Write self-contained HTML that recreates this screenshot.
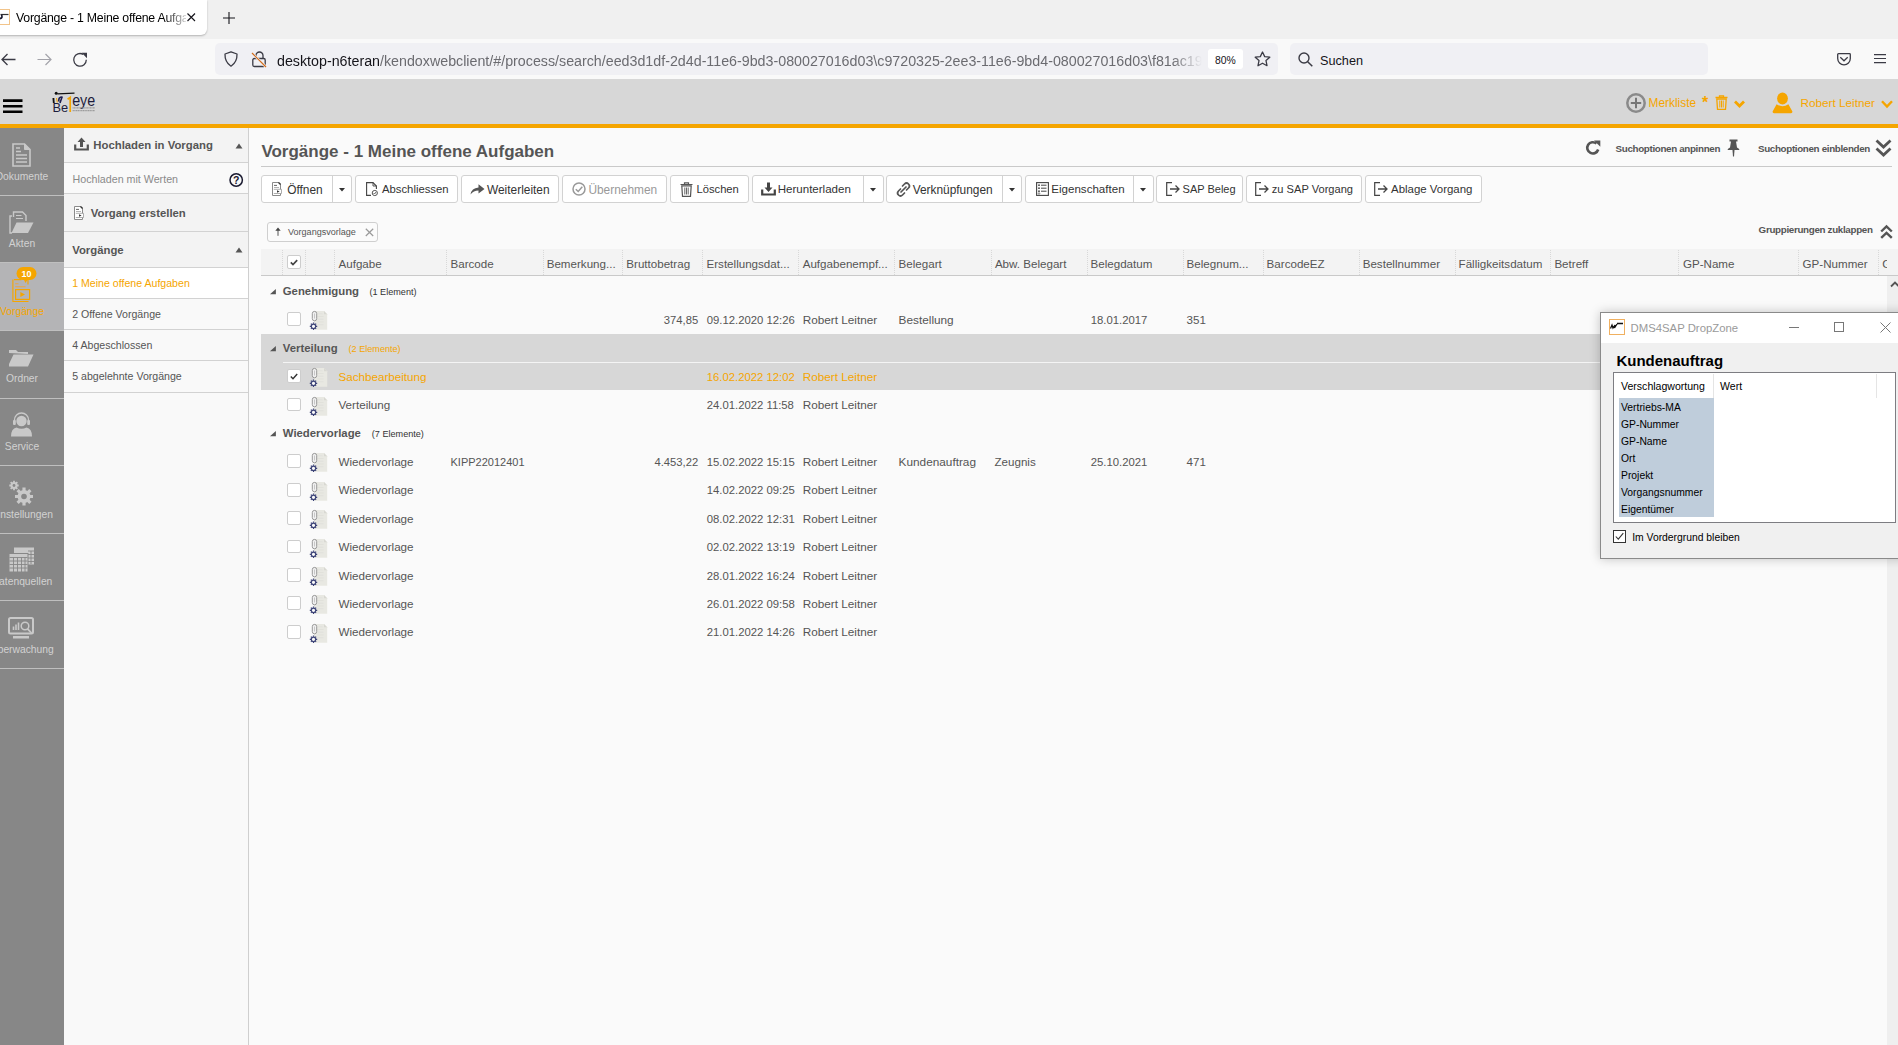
<!DOCTYPE html>
<html><head><meta charset="utf-8">
<style>
*{margin:0;padding:0;box-sizing:border-box}
html,body{width:1898px;height:1045px;overflow:hidden;background:#fafafa;font-family:"Liberation Sans",sans-serif;color:#555}
.a{position:absolute;white-space:nowrap}
svg{position:absolute;overflow:visible}
/* browser chrome */
#tabbar{position:absolute;left:0;top:0;width:1898px;height:39px;background:#f0f0f0}
#tab{position:absolute;left:-8px;top:0;width:215px;height:35px;background:#fff;border-radius:0 0 6px 6px;box-shadow:0 1px 2px rgba(0,0,0,.25)}
#nav{position:absolute;left:0;top:39px;width:1898px;height:40px;background:#f9f9f9}
#url{position:absolute;left:215px;top:43px;width:1063px;height:32px;background:#f0f0f4;border-radius:5px}
#srch{position:absolute;left:1290px;top:43px;width:418px;height:32px;background:#f0f0f4;border-radius:5px}
/* app header */
#hdr{position:absolute;left:0;top:79px;width:1898px;height:45px;background:#d7d7d7}
#orange{position:absolute;left:0;top:124px;width:1898px;height:4px;background:#f5a500}
#side{position:absolute;left:0;top:128px;width:64px;height:917px;background:#878787}
#side2{position:absolute;left:64px;top:128px;width:185px;height:917px;background:#f9f9f9;border-right:1px solid #cfcfcf}
.st{position:absolute;left:-22px;width:88px;text-align:center;font-size:10.3px;color:#d2d2d2;white-space:nowrap}
.sb{position:absolute;white-space:nowrap;font-size:11.35px;font-weight:bold;color:#555}
.si{position:absolute;left:72.2px;white-space:nowrap;font-size:10.6px;color:#555}
.btn{position:absolute;top:175.4px;height:27.2px;background:#fff;border:1px solid #d2d2d2;border-radius:3px}
.spl{position:absolute;top:0;width:1px;height:100%;background:#d2d2d2}
.bt{position:absolute;top:182.7px;white-space:nowrap;color:#333}
.cb{position:absolute;width:13.4px;height:13.8px;background:#fff;border:1px solid #cdcdcd;border-radius:2px}
.dz{position:absolute;white-space:nowrap;font-size:10.35px;color:#000}
</style></head>
<body>
<div id="tabbar"></div>
<div id="tab"></div>
<div id="nav"></div>
<div id="url"></div>
<div id="srch"></div>
<div id="hdr"></div>
<div id="orange"></div>
<div id="side"></div>
<div id="side2"></div>

<!-- tab contents -->
<div class="a" style="left:-6px;top:9px;width:16px;height:16px;border:1px solid #f2c48a;background:#fff"></div>
<svg style="left:0px;top:12px" width="10" height="9" viewBox="0 0 10 9"><path d="M0.5 2.5 H8.5" stroke="#333" stroke-width="1.2"/><path d="M1.6 2.8 Q2.2 4.8 1.8 5.5 Q1.2 6.5 -1 6.8" stroke="#1a1a30" stroke-width="1.7" fill="none"/></svg>
<div class="a" style="left:16px;top:10.5px;font-size:12.3px;letter-spacing:-0.23px;color:#000;width:170px;overflow:hidden;-webkit-mask-image:linear-gradient(90deg,#000 148px,rgba(0,0,0,.25) 168px,transparent 174px)">Vorgänge - 1 Meine offene Aufgaben</div>
<svg style="left:187px;top:13px" width="9" height="9" viewBox="0 0 9 9"><path d="M0.5 0.5 L8 8 M8 0.5 L0.5 8" stroke="#15141a" stroke-width="1.15"/></svg>
<svg style="left:222.5px;top:12px" width="12" height="12" viewBox="0 0 12 12"><path d="M6 0 V12 M0 6 H12" stroke="#15141a" stroke-width="1.1"/></svg>
<!-- nav -->
<svg style="left:1px;top:53px" width="15" height="13" viewBox="0 0 15 13"><path d="M14.5 6.5 H1.5 M6.5 1 L1 6.5 L6.5 12" stroke="#3b3b45" stroke-width="1.3" fill="none"/></svg>
<svg style="left:37px;top:53px" width="15" height="13" viewBox="0 0 15 13"><path d="M0.5 6.5 H13.5 M8.5 1 L14 6.5 L8.5 12" stroke="#a3a3aa" stroke-width="1.2" fill="none"/></svg>
<svg style="left:72px;top:52px" width="16" height="16" viewBox="0 0 16 16"><path d="M14.3 7.8 A6.3 6.3 0 1 1 11.2 2.4" stroke="#3b3b45" stroke-width="1.3" fill="none"/><path d="M9.6 0.8 H15 V6.2 Z" fill="#3b3b45"/></svg>
<svg style="left:224px;top:51px" width="14" height="16" viewBox="0 0 14 16"><path d="M7 0.8 L13 3 Q13.3 11 7 15.2 Q0.7 11 1 3 Z" stroke="#3b3b45" stroke-width="1.3" fill="none" stroke-linejoin="round"/></svg>
<svg style="left:252px;top:51px" width="15" height="16" viewBox="0 0 15 16"><path d="M4 7.5 V4.5 A3.5 3.5 0 0 1 11 4.5 V7.5" stroke="#3b3b45" stroke-width="1.3" fill="none"/><rect x="0.8" y="7.5" width="12.4" height="8" rx="1.5" stroke="#3b3b45" stroke-width="1.3" fill="none"/><path d="M0 2 L14 16" stroke="#f0f0f4" stroke-width="2.5"/><path d="M0 2 L14 16" stroke="#d36c1a" stroke-width="1.2"/></svg>
<div class="a" style="left:277px;top:52.5px;font-size:14.25px;color:#15141a;width:930px;overflow:hidden;-webkit-mask-image:linear-gradient(90deg,#000 895px,transparent 925px)">desktop-n6teran<span style="color:#6b6b70">/kendoxwebclient/#/process/search/eed3d1df-2d4d-11e6-9bd3-080027016d03\c9720325-2ee3-11e6-9bd4-080027016d03\f81ac19f-2ee3</span></div>
<div class="a" style="left:1208px;top:49px;width:35px;height:20px;background:#fff;border-radius:3px"></div>
<div class="a" style="left:1215px;top:55px;font-size:10.4px;color:#15141a">80%</div>
<svg style="left:1254px;top:51px" width="17" height="16" viewBox="0 0 17 16"><path d="M8.5 1 L10.7 5.6 L15.8 6.2 L12 9.6 L13 14.7 L8.5 12.2 L4 14.7 L5 9.6 L1.2 6.2 L6.3 5.6 Z" stroke="#3b3b45" stroke-width="1.3" fill="none" stroke-linejoin="round"/></svg>
<svg style="left:1298px;top:52px" width="15" height="15" viewBox="0 0 15 15"><circle cx="6" cy="6" r="5" stroke="#3b3b45" stroke-width="1.4" fill="none"/><path d="M9.7 9.7 L14.3 14.3" stroke="#3b3b45" stroke-width="1.5"/></svg>
<div class="a" style="left:1320px;top:54px;font-size:12.7px;color:#15141a">Suchen</div>
<svg style="left:1837px;top:53px" width="14" height="13" viewBox="0 0 14 13"><path d="M1.5 0.7 H12.5 Q13.3 0.7 13.3 1.5 V5.5 A6.3 6.3 0 0 1 0.7 5.5 V1.5 Q0.7 0.7 1.5 0.7 Z" stroke="#3b3b45" stroke-width="1.3" fill="none"/><path d="M3.3 4.2 L7 7.8 L10.7 4.2" stroke="#3b3b45" stroke-width="1.2" fill="none"/></svg>
<svg style="left:1874px;top:53px" width="12" height="11" viewBox="0 0 12 11"><path d="M0 1.6 H12 M0 5.5 H12 M0 9.6 H12" stroke="#3b3b45" stroke-width="1.1"/></svg>

<!-- sidebar icons -->
<div class="a" style="left:0;top:262px;width:64px;height:68px;background:#b4b4b6"></div>
<div class="a" style="left:0;top:195px;width:64px;height:1px;background:#bfbfbf"></div>
<div class="a" style="left:0;top:262px;width:64px;height:1px;background:#bfbfbf"></div>
<div class="a" style="left:0;top:330px;width:64px;height:1px;background:#bfbfbf"></div>
<div class="a" style="left:0;top:398px;width:64px;height:1px;background:#bfbfbf"></div>
<div class="a" style="left:0;top:465px;width:64px;height:1px;background:#bfbfbf"></div>
<div class="a" style="left:0;top:533px;width:64px;height:1px;background:#bfbfbf"></div>
<div class="a" style="left:0;top:600px;width:64px;height:1px;background:#bfbfbf"></div>
<div class="a" style="left:0;top:668px;width:64px;height:1px;background:#bfbfbf"></div>
<div class="st" style="top:171px">Dokumente</div>
<div class="st" style="top:237.6px">Akten</div>
<div class="st" style="top:306px;color:#f5a500">Vorgänge</div>
<div class="st" style="top:373px">Ordner</div>
<div class="st" style="top:440.8px">Service</div>
<div class="st" style="top:508.5px">Einstellungen</div>
<div class="st" style="top:575.8px">Datenquellen</div>
<div class="st" style="top:643.5px">Überwachung</div>
<!-- Dokumente icon -->
<svg style="left:12px;top:143px" width="19" height="24" viewBox="0 0 19 24"><path d="M1 1 H12.5 L18 6.5 V23 H1 Z" stroke="#c9c9c9" stroke-width="1.6" fill="none"/><path d="M12.5 1 V6.5 H18" fill="#c9c9c9" stroke="#c9c9c9" stroke-width="1"/><path d="M4 5 H8 M4 8.5 H9 M4 12 H15 M4 15.5 H15 M4 19 H15" stroke="#c9c9c9" stroke-width="1.5"/></svg>
<!-- Akten icon -->
<svg style="left:9px;top:211px" width="25" height="23" viewBox="0 0 25 23"><path d="M4.5 6 V1 H13.5 L17 4.5 V10" stroke="#c9c9c9" stroke-width="1.4" fill="none"/><path d="M7 4.5 H12.5 M7 7.5 H14" stroke="#c9c9c9" stroke-width="1.2"/><path d="M3 5 H1 V22 H3" stroke="#c9c9c9" stroke-width="1.4" fill="none"/><path d="M2.5 22 L7.5 11.5 H24.5 L19 22 Z" fill="#c9c9c9"/></svg>
<!-- Vorgaenge icon -->
<svg style="left:12px;top:266px" width="26" height="37" viewBox="0 0 26 37"><path d="M2 13.6 H9.5 M14.5 13.6 H16 V18.5 M16.5 35.5 H0.9 V13.6" stroke="#f5a500" stroke-width="1.1" fill="none"/><path d="M3.2 17.8 H6.5 M3.2 20.8 H13.5" stroke="#e8a545" stroke-width="1.1"/><rect x="3.6" y="23.6" width="14" height="9.8" stroke="#f5a500" stroke-width="1.2" fill="none"/><path d="M8.3 26 L13 28.5 L8.3 31 Z" fill="#f5a500"/><rect x="4.5" y="1" width="20" height="13" rx="6.5" fill="#f5a500"/><path d="M11.5 13 L13.5 17 L16 13 Z" fill="#f5a500"/><text x="14.6" y="11" font-family="Liberation Sans" font-weight="bold" font-size="9" fill="#fff" text-anchor="middle">10</text></svg>
<!-- Ordner icon -->
<svg style="left:8px;top:349px" width="26" height="18" viewBox="0 0 26 18"><path d="M1 4 V1 H8 L10 3 H20 V5" fill="#c9c9c9"/><path d="M1 3 V17.5 H20 L25.5 5.5 H5.5 L1 15" fill="#c9c9c9"/></svg>
<!-- Service icon -->
<svg style="left:10px;top:412px" width="23" height="25" viewBox="0 0 23 25"><circle cx="11.5" cy="9" r="5.2" fill="#c9c9c9"/><path d="M4.5 10 V8 A7 7 0 0 1 18.5 8 V10" stroke="#c9c9c9" stroke-width="1.3" fill="none"/><rect x="3" y="8" width="2.8" height="5" rx="1" fill="#c9c9c9"/><rect x="17.2" y="8" width="2.8" height="5" rx="1" fill="#c9c9c9"/><path d="M1 24.5 Q1 16.5 6.5 15.5 Q11.5 18 16.5 15.5 Q22 16.5 22 24.5 Z" fill="#c9c9c9"/></svg>
<!-- Einstellungen icon -->
<svg style="left:8px;top:480px" width="26" height="26" viewBox="0 0 26 26"><g fill="#c9c9c9"><circle cx="16" cy="16.5" r="6.5"/><circle cx="6" cy="5.5" r="3.5"/></g><g stroke="#c9c9c9" stroke-width="3.2"><path d="M16 7.5 V25.5 M7 16.5 H25 M9.6 10.1 L22.4 22.9 M22.4 10.1 L9.6 22.9"/></g><g stroke="#c9c9c9" stroke-width="1.8"><path d="M6 0.8 V10.2 M1.3 5.5 H10.7 M2.7 2.2 L9.3 8.8 M9.3 2.2 L2.7 8.8"/></g><circle cx="16" cy="16.5" r="2.8" fill="#878787"/><circle cx="6" cy="5.5" r="1.4" fill="#878787"/></svg>
<!-- Datenquellen icon -->
<svg style="left:8px;top:547px" width="27" height="26" viewBox="0 0 27 26"><rect x="6" y="0.5" width="20" height="17" fill="#c9c9c9"/><rect x="1" y="6.5" width="19" height="18.5" fill="#c9c9c9" stroke="#878787" stroke-width="1"/><g stroke="#878787" stroke-width="0.9"><path d="M1.5 10.5 H19.5 M1.5 14 H19.5 M1.5 17.5 H19.5 M1.5 21 H19.5 M5.5 10.5 V25 M9.5 10.5 V25 M13.5 10.5 V25 M17 10.5 V25"/><path d="M20 4 H26 M20 7.5 H26 M20 11 H26 M20 14.5 H26 M23 4 V17"/></g></svg>
<!-- Ueberwachung icon -->
<svg style="left:8px;top:617px" width="27" height="22" viewBox="0 0 27 22"><rect x="1" y="1" width="24" height="15.5" rx="1.5" stroke="#c9c9c9" stroke-width="2" fill="none"/><rect x="5" y="19" width="16" height="2.5" fill="#c9c9c9"/><path d="M5.5 13 V9.5 M8 13 V7.5 M10.5 13 V5.5" stroke="#c9c9c9" stroke-width="1.6"/><circle cx="17" cy="9" r="3.8" stroke="#c9c9c9" stroke-width="1.5" fill="none"/><path d="M19.5 11.8 L23.5 16" stroke="#c9c9c9" stroke-width="1.8"/></svg>
<!-- sidebar 2 -->
<div class="a" style="left:64px;top:128px;width:184px;height:34px;background:#f3f3f3"></div>
<div class="a" style="left:64px;top:162px;width:184px;height:1px;background:#d2d2d2"></div>
<div class="a" style="left:64px;top:193px;width:184px;height:39px;background:#f3f3f3;border-top:1px solid #d2d2d2;border-bottom:1px solid #d2d2d2"></div>
<div class="a" style="left:64px;top:232px;width:184px;height:36px;background:#f3f3f3;border-bottom:1px solid #d2d2d2"></div>
<div class="a" style="left:64px;top:268px;width:184px;height:31px;background:#fff;border-bottom:1px solid #d2d2d2"></div>
<div class="a" style="left:64px;top:329px;width:184px;height:1px;background:#d2d2d2"></div>
<div class="a" style="left:64px;top:360px;width:184px;height:1px;background:#d2d2d2"></div>
<div class="a" style="left:64px;top:392px;width:184px;height:1px;background:#d2d2d2"></div>
<svg style="left:74px;top:137px" width="15" height="14" viewBox="0 0 15 14"><path d="M7.5 0.5 L11.5 5 H9 V10 H6 V5 H3.5 Z" fill="#555"/><path d="M1.2 7.5 V12.5 H13.8 V7.5" stroke="#555" stroke-width="2.2" fill="none"/></svg>
<div class="sb" style="left:93.3px;top:138.5px">Hochladen in Vorgang</div>
<svg style="left:235px;top:143px" width="8" height="6" viewBox="0 0 8 6"><path d="M4 0.5 L7.5 5.5 H0.5 Z" fill="#555"/></svg>
<div class="a" style="left:72.5px;top:172.5px;font-size:10.7px;color:#8a8a8a">Hochladen mit Werten</div>
<svg style="left:229px;top:173px" width="15" height="15" viewBox="0 0 15 15"><circle cx="7.2" cy="7" r="6.2" stroke="#1a1a30" stroke-width="1.5" fill="none"/><text x="7.2" y="11" font-family="Liberation Sans" font-weight="bold" font-size="10.5" fill="#1a1a30" text-anchor="middle">?</text></svg>
<svg style="left:74px;top:206px" width="11" height="14" viewBox="0 0 11 14"><path d="M0.5 0.5 H7 L8.5 2 V13.5 H0.5 Z" stroke="#8a8a8a" stroke-width="1" fill="#fff"/><path d="M6.5 0.5 L8.5 2.5" stroke="#333" stroke-width="1.3"/><path d="M2 3.4 H5" stroke="#555" stroke-width="0.9"/><path d="M2 5.5 H7" stroke="#aaa" stroke-width="0.9"/><path d="M1.8 7.3 H9.5 V11.5 H1.8" stroke="#999" stroke-width="0.8" fill="#fff"/><path d="M5 8.2 L7.6 9.5 L5 10.8 Z" fill="#333"/></svg>
<div class="sb" style="left:90.8px;top:206.5px">Vorgang erstellen</div>
<div class="sb" style="left:72.2px;top:243.5px">Vorgänge</div>
<svg style="left:235px;top:246.5px" width="8" height="6" viewBox="0 0 8 6"><path d="M4 0.5 L7.5 5.5 H0.5 Z" fill="#555"/></svg>
<div class="si" style="top:277px;color:#f5a500">1 Meine offene Aufgaben</div>
<div class="si" style="top:308px">2 Offene Vorgänge</div>
<div class="si" style="top:339px">4 Abgeschlossen</div>
<div class="si" style="top:370px">5 abgelehnte Vorgänge</div>


<!-- main title -->
<div class="a" style="left:261.4px;top:141.5px;font-size:17px;font-weight:bold;color:#555">Vorgänge - 1 Meine offene Aufgaben</div>
<div class="a" style="left:261px;top:166px;width:1631px;height:1px;background:#c9c9c9"></div>
<svg style="left:1585px;top:139.7px" width="16" height="16" viewBox="0 0 16 16"><path d="M13.2 9.5 A5.6 5.6 0 1 1 11.5 3.6" stroke="#555" stroke-width="2.6" fill="none"/><path d="M9 0.5 H15.3 V6.8 Z" fill="#555"/></svg>
<div class="a" style="left:1615.6px;top:143px;font-size:9.8px;letter-spacing:-0.34px;font-weight:bold;color:#555">Suchoptionen anpinnen</div>
<svg style="left:1727px;top:139px" width="13" height="18" viewBox="0 0 13 18"><path d="M2.5 0.5 H10.5 V2.5 H9 L10 8.5 Q12.5 9.5 12.5 11 H0.5 Q0.5 9.5 3 8.5 L4 2.5 H2.5 Z" fill="#555"/><path d="M5.5 11 H7.5 L7 17.5 H6 Z" fill="#555"/></svg>
<div class="a" style="left:1758px;top:143px;font-size:9.8px;letter-spacing:-0.337px;font-weight:bold;color:#555">Suchoptionen einblenden</div>
<svg style="left:1875px;top:139px" width="17" height="18" viewBox="0 0 17 18"><path d="M1.5 1.5 L8.5 8 L15.5 1.5 M1.5 9.5 L8.5 16 L15.5 9.5" stroke="#555" stroke-width="2.8" fill="none"/></svg>
<!-- toolbar -->
<div class="btn" style="left:261px;width:91px"><div class="spl" style="left:70px"></div></div>
<div class="btn" style="left:355px;width:103px"></div>
<div class="btn" style="left:461px;width:98px"></div>
<div class="btn" style="left:562px;width:105px"></div>
<div class="btn" style="left:670px;width:79px"></div>
<div class="btn" style="left:752px;width:132px"><div class="spl" style="left:110px"></div></div>
<div class="btn" style="left:886px;width:136px"><div class="spl" style="left:115px"></div></div>
<div class="btn" style="left:1025px;width:129px"><div class="spl" style="left:107px"></div></div>
<div class="btn" style="left:1156px;width:87px"></div>
<div class="btn" style="left:1246px;width:116px"></div>
<div class="btn" style="left:1365px;width:117px"></div>
<svg style="left:339px;top:188px" width="6" height="4" viewBox="0 0 6 4"><path d="M0 0 H6 L3 3.5 Z" fill="#333"/></svg>
<svg style="left:870px;top:188px" width="6" height="4" viewBox="0 0 6 4"><path d="M0 0 H6 L3 3.5 Z" fill="#333"/></svg>
<svg style="left:1009px;top:188px" width="6" height="4" viewBox="0 0 6 4"><path d="M0 0 H6 L3 3.5 Z" fill="#333"/></svg>
<svg style="left:1140px;top:188px" width="6" height="4" viewBox="0 0 6 4"><path d="M0 0 H6 L3 3.5 Z" fill="#333"/></svg>
<div class="bt" style="left:287.2px;font-size:11.9px">Öffnen</div>
<div class="bt" style="left:382px;font-size:11.3px">Abschliessen</div>
<div class="bt" style="left:487px;font-size:11.9px">Weiterleiten</div>
<div class="bt" style="left:588.4px;font-size:11.9px;color:#999">Übernehmen</div>
<div class="bt" style="left:696.5px;font-size:11.2px">Löschen</div>
<div class="bt" style="left:777.7px;font-size:11.55px">Herunterladen</div>
<div class="bt" style="left:912.7px;font-size:11.9px">Verknüpfungen</div>
<div class="bt" style="left:1051.3px;font-size:11.57px">Eigenschaften</div>
<div class="bt" style="left:1182.6px;font-size:11px">SAP Beleg</div>
<div class="bt" style="left:1271.8px;font-size:11.1px">zu SAP Vorgang</div>
<div class="bt" style="left:1391px;font-size:11.45px">Ablage Vorgang</div>
<!-- button icons -->
<svg style="left:272px;top:182px" width="11" height="14" viewBox="0 0 11 14"><path d="M0.5 0.5 H7 L8.5 2 V13.5 H0.5 Z" stroke="#8a8a8a" stroke-width="1" fill="#fff"/><path d="M6.5 0.5 L8.5 2.5" stroke="#333" stroke-width="1.3"/><path d="M2 3.4 H5" stroke="#555" stroke-width="0.9"/><path d="M2 5.5 H7" stroke="#aaa" stroke-width="0.9"/><path d="M1.8 7.3 H9.5 V11.5 H1.8" stroke="#999" stroke-width="0.8" fill="#fff"/><path d="M5 8.2 L7.6 9.5 L5 10.8 Z" fill="#333"/></svg>
<svg style="left:366px;top:182px" width="12" height="14" viewBox="0 0 12 14"><path d="M5 13.4 H0.6 V0.6 H7 L10.4 4 V7" stroke="#444" stroke-width="1.1" fill="none"/><path d="M7 0.6 V4 H10.4" stroke="#444" stroke-width="0.9" fill="none"/><circle cx="8.8" cy="11" r="2.6" stroke="#555" stroke-width="1" fill="none"/><path d="M7.6 11 L8.5 12 L10.1 10" stroke="#555" stroke-width="0.9" fill="none"/></svg>
<svg style="left:470px;top:184px" width="15" height="11" viewBox="0 0 15 11"><path d="M0.5 10.5 Q1.5 4 8.5 3.5 V0.3 L14.5 5 L8.5 9.5 V6.5 Q3.5 6.5 0.5 10.5 Z" fill="#555"/></svg>
<svg style="left:571.5px;top:181.5px" width="14" height="14" viewBox="0 0 14 14"><circle cx="7" cy="7" r="6" stroke="#999" stroke-width="1.5" fill="none"/><path d="M3.8 7.2 L6.2 9.5 L10.3 4.8" stroke="#999" stroke-width="1.5" fill="none"/></svg>
<svg style="left:680px;top:181.5px" width="13" height="15" viewBox="0 0 13 15"><path d="M0.5 2.5 H12.5 M4.5 2.5 V0.8 H8.5 V2.5" stroke="#555" stroke-width="1.2" fill="none"/><path d="M1.8 3.8 H11.2 L10.5 14.3 H2.5 Z" stroke="#555" stroke-width="1.2" fill="none"/><path d="M4.8 5.5 V12.5 M6.5 5.5 V12.5 M8.2 5.5 V12.5" stroke="#555" stroke-width="0.9"/></svg>
<svg style="left:760.5px;top:182px" width="15" height="14" viewBox="0 0 15 14"><path d="M6 0.5 H9 V5.5 H11.5 L7.5 10 L3.5 5.5 H6 Z" fill="#444"/><path d="M1.2 7.5 V12.5 H13.8 V7.5" stroke="#444" stroke-width="2.2" fill="none"/></svg>
<svg style="left:895.5px;top:181.5px" width="15" height="15" viewBox="0 0 15 15"><path d="M6.5 4 L8.5 2 Q10.5 0 12.5 2 Q14.5 4 12.5 6 L10.5 8 M8.5 11 L6.5 13 Q4.5 15 2.5 13 Q0.5 11 2.5 9 L4.5 7 M5 10 L10 5" stroke="#555" stroke-width="1.7" fill="none" stroke-linecap="round"/></svg>
<svg style="left:1035.5px;top:182px" width="13" height="14" viewBox="0 0 13 14"><rect x="0.6" y="0.6" width="11.8" height="12.8" stroke="#444" stroke-width="1.1" fill="none"/><path d="M5 3.2 H10.5 M5 6.2 H10.5 M5 9.2 H10.5" stroke="#444" stroke-width="1"/><circle cx="3" cy="3.2" r="0.9" fill="#444"/><circle cx="3" cy="6.2" r="0.9" fill="#444"/><circle cx="3" cy="9.2" r="0.9" fill="#444"/><circle cx="3" cy="11.5" r="0.8" stroke="#444" stroke-width="0.6" fill="none"/></svg>
<svg style="left:1165.8px;top:182.4px" width="14" height="14" viewBox="0 0 14 14"><path d="M6 0.6 H0.7 V13.4 H6" stroke="#444" stroke-width="1.2" fill="none"/><path d="M4 7 H12.8 M9.5 3.5 L13 7 L9.5 10.5" stroke="#444" stroke-width="1.3" fill="none"/></svg>
<svg style="left:1255.3px;top:182.4px" width="14" height="14" viewBox="0 0 14 14"><path d="M6 0.6 H0.7 V13.4 H6" stroke="#444" stroke-width="1.2" fill="none"/><path d="M4 7 H12.8 M9.5 3.5 L13 7 L9.5 10.5" stroke="#444" stroke-width="1.3" fill="none"/></svg>
<svg style="left:1374.3px;top:182.4px" width="14" height="14" viewBox="0 0 14 14"><path d="M6 0.6 H0.7 V13.4 H6" stroke="#444" stroke-width="1.2" fill="none"/><path d="M4 7 H12.8 M9.5 3.5 L13 7 L9.5 10.5" stroke="#444" stroke-width="1.3" fill="none"/></svg>
<!-- tag -->
<div class="a" style="left:267.2px;top:222.3px;width:111.3px;height:20px;border:1px solid #cfcfcf;border-radius:3px;background:#fbfbfb"></div>
<svg style="left:275px;top:226.5px" width="6" height="9" viewBox="0 0 6 9"><path d="M3 8.8 V3" stroke="#555" stroke-width="1"/><path d="M0.3 3.8 L3 0.5 L5.7 3.8 Z" fill="#444"/></svg>
<div class="a" style="left:288px;top:227px;font-size:9.06px;color:#555">Vorgangsvorlage</div>
<svg style="left:365px;top:227.5px" width="9" height="9" viewBox="0 0 9 9"><path d="M0.8 0.8 L8.2 8 M8.2 0.8 L0.8 8" stroke="#9a9a9a" stroke-width="1.2"/></svg>
<div class="a" style="left:1758.6px;top:224.4px;font-size:9.8px;letter-spacing:-0.32px;font-weight:bold;color:#555">Gruppierungen zuklappen</div>
<svg style="left:1879.5px;top:225px" width="13" height="14" viewBox="0 0 13 14"><path d="M1.2 6.5 L6.5 1.5 L11.8 6.5 M1.2 12.8 L6.5 7.8 L11.8 12.8" stroke="#555" stroke-width="2.4" fill="none"/></svg>

<!--TABLE-->
<div class="a" style="left:261px;top:249px;width:1637px;height:26px;background:#f3f3f3"></div>
<div class="a" style="left:261px;top:275px;width:1637px;height:1px;background:#c9c9c9"></div>
<div class="a" style="left:282px;top:250px;width:0;height:25px;border-left:1px dotted #d8d8d8"></div>
<div class="a" style="left:305px;top:250px;width:0;height:25px;border-left:1px dotted #d8d8d8"></div>
<div class="a" style="left:334px;top:250px;width:0;height:25px;border-left:1px dotted #d8d8d8"></div>
<div class="a" style="left:446px;top:250px;width:0;height:25px;border-left:1px dotted #d8d8d8"></div>
<div class="a" style="left:543px;top:250px;width:0;height:25px;border-left:1px dotted #d8d8d8"></div>
<div class="a" style="left:622px;top:250px;width:0;height:25px;border-left:1px dotted #d8d8d8"></div>
<div class="a" style="left:702px;top:250px;width:0;height:25px;border-left:1px dotted #d8d8d8"></div>
<div class="a" style="left:798px;top:250px;width:0;height:25px;border-left:1px dotted #d8d8d8"></div>
<div class="a" style="left:894px;top:250px;width:0;height:25px;border-left:1px dotted #d8d8d8"></div>
<div class="a" style="left:991px;top:250px;width:0;height:25px;border-left:1px dotted #d8d8d8"></div>
<div class="a" style="left:1087px;top:250px;width:0;height:25px;border-left:1px dotted #d8d8d8"></div>
<div class="a" style="left:1183px;top:250px;width:0;height:25px;border-left:1px dotted #d8d8d8"></div>
<div class="a" style="left:1263px;top:250px;width:0;height:25px;border-left:1px dotted #d8d8d8"></div>
<div class="a" style="left:1359px;top:250px;width:0;height:25px;border-left:1px dotted #d8d8d8"></div>
<div class="a" style="left:1455px;top:250px;width:0;height:25px;border-left:1px dotted #d8d8d8"></div>
<div class="a" style="left:1550px;top:250px;width:0;height:25px;border-left:1px dotted #d8d8d8"></div>
<div class="a" style="left:1678px;top:250px;width:0;height:25px;border-left:1px dotted #d8d8d8"></div>
<div class="a" style="left:1798px;top:250px;width:0;height:25px;border-left:1px dotted #d8d8d8"></div>
<div class="a" style="left:1878px;top:250px;width:0;height:25px;border-left:1px dotted #d8d8d8"></div>
<div class="a" style="left:338.5px;top:257px;font-size:11.6px;color:#555;">Aufgabe</div>
<div class="a" style="left:450.5px;top:257px;font-size:11.6px;color:#555;">Barcode</div>
<div class="a" style="left:546.7px;top:257px;font-size:11.6px;color:#555;">Bemerkung...</div>
<div class="a" style="left:626.3px;top:257px;font-size:11.6px;color:#555;">Bruttobetrag</div>
<div class="a" style="left:706.5px;top:257px;font-size:11.6px;color:#555;">Erstellungsdat...</div>
<div class="a" style="left:802.7px;top:257px;font-size:11.6px;color:#555;">Aufgabenempf...</div>
<div class="a" style="left:898.6px;top:257px;font-size:11.6px;color:#555;">Belegart</div>
<div class="a" style="left:994.9px;top:257px;font-size:11.6px;color:#555;">Abw. Belegart</div>
<div class="a" style="left:1090.5px;top:257px;font-size:11.6px;color:#555;">Belegdatum</div>
<div class="a" style="left:1186.6px;top:257px;font-size:11.6px;color:#555;">Belegnum...</div>
<div class="a" style="left:1266.6px;top:257px;font-size:11.6px;color:#555;">BarcodeEZ</div>
<div class="a" style="left:1362.7px;top:257px;font-size:11.6px;color:#555;">Bestellnummer</div>
<div class="a" style="left:1458.6px;top:257px;font-size:11.6px;color:#555;">Fälligkeitsdatum</div>
<div class="a" style="left:1554.4px;top:257px;font-size:11.6px;color:#555;">Betreff</div>
<div class="a" style="left:1682.9px;top:257px;font-size:11.6px;color:#555;">GP-Name</div>
<div class="a" style="left:1802.6px;top:257px;font-size:11.6px;color:#555;">GP-Nummer</div>
<div class="a" style="left:1882px;top:249px;width:5px;height:26px;overflow:hidden"><div class="a" style="left:0.3px;top:8px;font-size:11.6px;color:#555;">G</div>
</div><div class="cb" style="left:287.4px;top:255px;height:14px"></div><svg style="left:290px;top:258.5px" width="8" height="7" viewBox="0 0 8 7"><path d="M0.8 3.3 L3 5.5 L7.2 1.2" stroke="#444" stroke-width="1.7" fill="none"/></svg>
<div class="a" style="left:261px;top:333.8px;width:1626px;height:56px;background:#d7d7d7"></div>
<div class="a" style="left:283px;top:362px;width:1604px;height:1px;background:#f4f4f4"></div>
<svg style="left:270.4px;top:289.00px" width="6" height="6" viewBox="0 0 6 6"><path d="M5.9 0 V5.3 H0 Z" fill="#555"/></svg>
<div class="a" style="left:282.8px;top:285px;font-size:11.35px;color:#555;font-weight:bold;">Genehmigung</div>
<svg style="left:270.4px;top:345.80px" width="6" height="6" viewBox="0 0 6 6"><path d="M5.9 0 V5.3 H0 Z" fill="#555"/></svg>
<div class="a" style="left:282.8px;top:342px;font-size:11.35px;color:#555;font-weight:bold;">Verteilung</div>
<svg style="left:270.4px;top:431.00px" width="6" height="6" viewBox="0 0 6 6"><path d="M5.9 0 V5.3 H0 Z" fill="#555"/></svg>
<div class="a" style="left:282.8px;top:427px;font-size:11.35px;color:#555;font-weight:bold;">Wiedervorlage</div>
<div class="a" style="left:369.5px;top:287px;font-size:9.1px;color:#333;">(1 Element)</div>
<div class="a" style="left:348.6px;top:344px;font-size:9.1px;color:#f5a500;">(2 Elemente)</div>
<div class="a" style="left:371.8px;top:429px;font-size:9.1px;color:#333;">(7 Elemente)</div>
<div class="cb" style="left:287.2px;top:312.40px"></div>
<svg style="left:310px;top:311.40px" width="18" height="19" viewBox="0 0 18 19"><path d="M4 0 H14 L17.2 3.2 V18.8 H4 Z" fill="#e8e8e2"/><path d="M14 0 V3.2 H17.2 Z" fill="#d8d8d2"/><path d="M7.5 2.8 H12.5 M7.5 5.5 H13.5 M7.5 8.2 H13.5 M7.5 11 H13.5 M7.5 13.7 H13.5" stroke="#dcdcd6" stroke-width="0.6"/><rect x="2.3" y="0.4" width="4.4" height="9.4" rx="2.2" stroke="#8e8e8e" stroke-width="0.9" fill="#f2f2f2"/><path d="M4.5 2.5 V7.5" stroke="#bbb" stroke-width="0.8"/><g transform="translate(3.5,15.3)"><path d="M2.50 0.00 L3.70 0.00 M1.77 1.77 L2.62 2.62 M0.00 2.50 L0.00 3.70 M-1.77 1.77 L-2.62 2.62 M-2.50 0.00 L-3.70 0.00 M-1.77 -1.77 L-2.62 -2.62 M-0.00 -2.50 L-0.00 -3.70 M1.77 -1.77 L2.62 -2.62" stroke="#3d4478" stroke-width="1.2"/><circle r="2.2" fill="#fafafa" stroke="#3d4478" stroke-width="1.2"/></g></svg>
<div class="a" style="right:1199.8px;top:314px;font-size:11.25px;color:#555;">374,85</div>
<div class="a" style="left:706.8px;top:314px;font-size:11.3px;color:#555;">09.12.2020 12:26</div>
<div class="a" style="left:802.7px;top:313px;font-size:11.75px;color:#555;">Robert Leitner</div>
<div class="a" style="left:898.6px;top:313px;font-size:11.8px;color:#555;">Bestellung</div>
<div class="a" style="left:1090.7px;top:314px;font-size:11.33px;color:#555;">18.01.2017</div>
<div class="a" style="left:1186.6px;top:313px;font-size:11.6px;color:#555;">351</div>
<div class="cb" style="left:287.2px;top:369.20px"></div>
<svg style="left:289.8px;top:372.50px" width="8" height="7" viewBox="0 0 8 7"><path d="M0.8 3.5 L3 5.8 L7.2 1" stroke="#333" stroke-width="1.4" fill="none"/></svg>
<svg style="left:310px;top:368.20px" width="18" height="19" viewBox="0 0 18 19"><path d="M4 0 H14 L17.2 3.2 V18.8 H4 Z" fill="#e8e8e2"/><path d="M14 0 V3.2 H17.2 Z" fill="#d8d8d2"/><path d="M7.5 2.8 H12.5 M7.5 5.5 H13.5 M7.5 8.2 H13.5 M7.5 11 H13.5 M7.5 13.7 H13.5" stroke="#dcdcd6" stroke-width="0.6"/><rect x="2.3" y="0.4" width="4.4" height="9.4" rx="2.2" stroke="#8e8e8e" stroke-width="0.9" fill="#f2f2f2"/><path d="M4.5 2.5 V7.5" stroke="#bbb" stroke-width="0.8"/><g transform="translate(3.5,15.3)"><path d="M2.50 0.00 L3.70 0.00 M1.77 1.77 L2.62 2.62 M0.00 2.50 L0.00 3.70 M-1.77 1.77 L-2.62 2.62 M-2.50 0.00 L-3.70 0.00 M-1.77 -1.77 L-2.62 -2.62 M-0.00 -2.50 L-0.00 -3.70 M1.77 -1.77 L2.62 -2.62" stroke="#3d4478" stroke-width="1.2"/><circle r="2.2" fill="#fafafa" stroke="#3d4478" stroke-width="1.2"/></g></svg>
<div class="a" style="left:338.5px;top:370px;font-size:11.65px;color:#f5a500;">Sachbearbeitung</div>
<div class="a" style="left:706.8px;top:371px;font-size:11.3px;color:#f5a500;">16.02.2022 12:02</div>
<div class="a" style="left:802.7px;top:370px;font-size:11.75px;color:#f5a500;">Robert Leitner</div>
<div class="cb" style="left:287.2px;top:397.60px"></div>
<svg style="left:310px;top:396.60px" width="18" height="19" viewBox="0 0 18 19"><path d="M4 0 H14 L17.2 3.2 V18.8 H4 Z" fill="#e8e8e2"/><path d="M14 0 V3.2 H17.2 Z" fill="#d8d8d2"/><path d="M7.5 2.8 H12.5 M7.5 5.5 H13.5 M7.5 8.2 H13.5 M7.5 11 H13.5 M7.5 13.7 H13.5" stroke="#dcdcd6" stroke-width="0.6"/><rect x="2.3" y="0.4" width="4.4" height="9.4" rx="2.2" stroke="#8e8e8e" stroke-width="0.9" fill="#f2f2f2"/><path d="M4.5 2.5 V7.5" stroke="#bbb" stroke-width="0.8"/><g transform="translate(3.5,15.3)"><path d="M2.50 0.00 L3.70 0.00 M1.77 1.77 L2.62 2.62 M0.00 2.50 L0.00 3.70 M-1.77 1.77 L-2.62 2.62 M-2.50 0.00 L-3.70 0.00 M-1.77 -1.77 L-2.62 -2.62 M-0.00 -2.50 L-0.00 -3.70 M1.77 -1.77 L2.62 -2.62" stroke="#3d4478" stroke-width="1.2"/><circle r="2.2" fill="#fafafa" stroke="#3d4478" stroke-width="1.2"/></g></svg>
<div class="a" style="left:338.5px;top:398px;font-size:11.65px;color:#555;">Verteilung</div>
<div class="a" style="left:706.8px;top:399px;font-size:11.3px;color:#555;">24.01.2022 11:58</div>
<div class="a" style="left:802.7px;top:398px;font-size:11.75px;color:#555;">Robert Leitner</div>
<div class="cb" style="left:287.2px;top:454.40px"></div>
<svg style="left:310px;top:453.40px" width="18" height="19" viewBox="0 0 18 19"><path d="M4 0 H14 L17.2 3.2 V18.8 H4 Z" fill="#e8e8e2"/><path d="M14 0 V3.2 H17.2 Z" fill="#d8d8d2"/><path d="M7.5 2.8 H12.5 M7.5 5.5 H13.5 M7.5 8.2 H13.5 M7.5 11 H13.5 M7.5 13.7 H13.5" stroke="#dcdcd6" stroke-width="0.6"/><rect x="2.3" y="0.4" width="4.4" height="9.4" rx="2.2" stroke="#8e8e8e" stroke-width="0.9" fill="#f2f2f2"/><path d="M4.5 2.5 V7.5" stroke="#bbb" stroke-width="0.8"/><g transform="translate(3.5,15.3)"><path d="M2.50 0.00 L3.70 0.00 M1.77 1.77 L2.62 2.62 M0.00 2.50 L0.00 3.70 M-1.77 1.77 L-2.62 2.62 M-2.50 0.00 L-3.70 0.00 M-1.77 -1.77 L-2.62 -2.62 M-0.00 -2.50 L-0.00 -3.70 M1.77 -1.77 L2.62 -2.62" stroke="#3d4478" stroke-width="1.2"/><circle r="2.2" fill="#fafafa" stroke="#3d4478" stroke-width="1.2"/></g></svg>
<div class="a" style="left:338.5px;top:455px;font-size:11.65px;color:#555;">Wiedervorlage</div>
<div class="a" style="left:450.5px;top:456px;font-size:11.0px;color:#555;">KIPP22012401</div>
<div class="a" style="right:1199.8px;top:456px;font-size:11.25px;color:#555;">4.453,22</div>
<div class="a" style="left:706.8px;top:456px;font-size:11.3px;color:#555;">15.02.2022 15:15</div>
<div class="a" style="left:802.7px;top:455px;font-size:11.75px;color:#555;">Robert Leitner</div>
<div class="a" style="left:898.6px;top:455px;font-size:11.8px;color:#555;">Kundenauftrag</div>
<div class="a" style="left:994.5px;top:455px;font-size:11.6px;color:#555;">Zeugnis</div>
<div class="a" style="left:1090.7px;top:456px;font-size:11.33px;color:#555;">25.10.2021</div>
<div class="a" style="left:1186.6px;top:455px;font-size:11.6px;color:#555;">471</div>
<div class="cb" style="left:287.2px;top:482.80px"></div>
<svg style="left:310px;top:481.80px" width="18" height="19" viewBox="0 0 18 19"><path d="M4 0 H14 L17.2 3.2 V18.8 H4 Z" fill="#e8e8e2"/><path d="M14 0 V3.2 H17.2 Z" fill="#d8d8d2"/><path d="M7.5 2.8 H12.5 M7.5 5.5 H13.5 M7.5 8.2 H13.5 M7.5 11 H13.5 M7.5 13.7 H13.5" stroke="#dcdcd6" stroke-width="0.6"/><rect x="2.3" y="0.4" width="4.4" height="9.4" rx="2.2" stroke="#8e8e8e" stroke-width="0.9" fill="#f2f2f2"/><path d="M4.5 2.5 V7.5" stroke="#bbb" stroke-width="0.8"/><g transform="translate(3.5,15.3)"><path d="M2.50 0.00 L3.70 0.00 M1.77 1.77 L2.62 2.62 M0.00 2.50 L0.00 3.70 M-1.77 1.77 L-2.62 2.62 M-2.50 0.00 L-3.70 0.00 M-1.77 -1.77 L-2.62 -2.62 M-0.00 -2.50 L-0.00 -3.70 M1.77 -1.77 L2.62 -2.62" stroke="#3d4478" stroke-width="1.2"/><circle r="2.2" fill="#fafafa" stroke="#3d4478" stroke-width="1.2"/></g></svg>
<div class="a" style="left:338.5px;top:483px;font-size:11.65px;color:#555;">Wiedervorlage</div>
<div class="a" style="left:706.8px;top:484px;font-size:11.3px;color:#555;">14.02.2022 09:25</div>
<div class="a" style="left:802.7px;top:483px;font-size:11.75px;color:#555;">Robert Leitner</div>
<div class="cb" style="left:287.2px;top:511.20px"></div>
<svg style="left:310px;top:510.20px" width="18" height="19" viewBox="0 0 18 19"><path d="M4 0 H14 L17.2 3.2 V18.8 H4 Z" fill="#e8e8e2"/><path d="M14 0 V3.2 H17.2 Z" fill="#d8d8d2"/><path d="M7.5 2.8 H12.5 M7.5 5.5 H13.5 M7.5 8.2 H13.5 M7.5 11 H13.5 M7.5 13.7 H13.5" stroke="#dcdcd6" stroke-width="0.6"/><rect x="2.3" y="0.4" width="4.4" height="9.4" rx="2.2" stroke="#8e8e8e" stroke-width="0.9" fill="#f2f2f2"/><path d="M4.5 2.5 V7.5" stroke="#bbb" stroke-width="0.8"/><g transform="translate(3.5,15.3)"><path d="M2.50 0.00 L3.70 0.00 M1.77 1.77 L2.62 2.62 M0.00 2.50 L0.00 3.70 M-1.77 1.77 L-2.62 2.62 M-2.50 0.00 L-3.70 0.00 M-1.77 -1.77 L-2.62 -2.62 M-0.00 -2.50 L-0.00 -3.70 M1.77 -1.77 L2.62 -2.62" stroke="#3d4478" stroke-width="1.2"/><circle r="2.2" fill="#fafafa" stroke="#3d4478" stroke-width="1.2"/></g></svg>
<div class="a" style="left:338.5px;top:512px;font-size:11.65px;color:#555;">Wiedervorlage</div>
<div class="a" style="left:706.8px;top:513px;font-size:11.3px;color:#555;">08.02.2022 12:31</div>
<div class="a" style="left:802.7px;top:512px;font-size:11.75px;color:#555;">Robert Leitner</div>
<div class="cb" style="left:287.2px;top:539.60px"></div>
<svg style="left:310px;top:538.60px" width="18" height="19" viewBox="0 0 18 19"><path d="M4 0 H14 L17.2 3.2 V18.8 H4 Z" fill="#e8e8e2"/><path d="M14 0 V3.2 H17.2 Z" fill="#d8d8d2"/><path d="M7.5 2.8 H12.5 M7.5 5.5 H13.5 M7.5 8.2 H13.5 M7.5 11 H13.5 M7.5 13.7 H13.5" stroke="#dcdcd6" stroke-width="0.6"/><rect x="2.3" y="0.4" width="4.4" height="9.4" rx="2.2" stroke="#8e8e8e" stroke-width="0.9" fill="#f2f2f2"/><path d="M4.5 2.5 V7.5" stroke="#bbb" stroke-width="0.8"/><g transform="translate(3.5,15.3)"><path d="M2.50 0.00 L3.70 0.00 M1.77 1.77 L2.62 2.62 M0.00 2.50 L0.00 3.70 M-1.77 1.77 L-2.62 2.62 M-2.50 0.00 L-3.70 0.00 M-1.77 -1.77 L-2.62 -2.62 M-0.00 -2.50 L-0.00 -3.70 M1.77 -1.77 L2.62 -2.62" stroke="#3d4478" stroke-width="1.2"/><circle r="2.2" fill="#fafafa" stroke="#3d4478" stroke-width="1.2"/></g></svg>
<div class="a" style="left:338.5px;top:540px;font-size:11.65px;color:#555;">Wiedervorlage</div>
<div class="a" style="left:706.8px;top:541px;font-size:11.3px;color:#555;">02.02.2022 13:19</div>
<div class="a" style="left:802.7px;top:540px;font-size:11.75px;color:#555;">Robert Leitner</div>
<div class="cb" style="left:287.2px;top:568.00px"></div>
<svg style="left:310px;top:567.00px" width="18" height="19" viewBox="0 0 18 19"><path d="M4 0 H14 L17.2 3.2 V18.8 H4 Z" fill="#e8e8e2"/><path d="M14 0 V3.2 H17.2 Z" fill="#d8d8d2"/><path d="M7.5 2.8 H12.5 M7.5 5.5 H13.5 M7.5 8.2 H13.5 M7.5 11 H13.5 M7.5 13.7 H13.5" stroke="#dcdcd6" stroke-width="0.6"/><rect x="2.3" y="0.4" width="4.4" height="9.4" rx="2.2" stroke="#8e8e8e" stroke-width="0.9" fill="#f2f2f2"/><path d="M4.5 2.5 V7.5" stroke="#bbb" stroke-width="0.8"/><g transform="translate(3.5,15.3)"><path d="M2.50 0.00 L3.70 0.00 M1.77 1.77 L2.62 2.62 M0.00 2.50 L0.00 3.70 M-1.77 1.77 L-2.62 2.62 M-2.50 0.00 L-3.70 0.00 M-1.77 -1.77 L-2.62 -2.62 M-0.00 -2.50 L-0.00 -3.70 M1.77 -1.77 L2.62 -2.62" stroke="#3d4478" stroke-width="1.2"/><circle r="2.2" fill="#fafafa" stroke="#3d4478" stroke-width="1.2"/></g></svg>
<div class="a" style="left:338.5px;top:569px;font-size:11.65px;color:#555;">Wiedervorlage</div>
<div class="a" style="left:706.8px;top:570px;font-size:11.3px;color:#555;">28.01.2022 16:24</div>
<div class="a" style="left:802.7px;top:569px;font-size:11.75px;color:#555;">Robert Leitner</div>
<div class="cb" style="left:287.2px;top:596.40px"></div>
<svg style="left:310px;top:595.40px" width="18" height="19" viewBox="0 0 18 19"><path d="M4 0 H14 L17.2 3.2 V18.8 H4 Z" fill="#e8e8e2"/><path d="M14 0 V3.2 H17.2 Z" fill="#d8d8d2"/><path d="M7.5 2.8 H12.5 M7.5 5.5 H13.5 M7.5 8.2 H13.5 M7.5 11 H13.5 M7.5 13.7 H13.5" stroke="#dcdcd6" stroke-width="0.6"/><rect x="2.3" y="0.4" width="4.4" height="9.4" rx="2.2" stroke="#8e8e8e" stroke-width="0.9" fill="#f2f2f2"/><path d="M4.5 2.5 V7.5" stroke="#bbb" stroke-width="0.8"/><g transform="translate(3.5,15.3)"><path d="M2.50 0.00 L3.70 0.00 M1.77 1.77 L2.62 2.62 M0.00 2.50 L0.00 3.70 M-1.77 1.77 L-2.62 2.62 M-2.50 0.00 L-3.70 0.00 M-1.77 -1.77 L-2.62 -2.62 M-0.00 -2.50 L-0.00 -3.70 M1.77 -1.77 L2.62 -2.62" stroke="#3d4478" stroke-width="1.2"/><circle r="2.2" fill="#fafafa" stroke="#3d4478" stroke-width="1.2"/></g></svg>
<div class="a" style="left:338.5px;top:597px;font-size:11.65px;color:#555;">Wiedervorlage</div>
<div class="a" style="left:706.8px;top:598px;font-size:11.3px;color:#555;">26.01.2022 09:58</div>
<div class="a" style="left:802.7px;top:597px;font-size:11.75px;color:#555;">Robert Leitner</div>
<div class="cb" style="left:287.2px;top:624.80px"></div>
<svg style="left:310px;top:623.80px" width="18" height="19" viewBox="0 0 18 19"><path d="M4 0 H14 L17.2 3.2 V18.8 H4 Z" fill="#e8e8e2"/><path d="M14 0 V3.2 H17.2 Z" fill="#d8d8d2"/><path d="M7.5 2.8 H12.5 M7.5 5.5 H13.5 M7.5 8.2 H13.5 M7.5 11 H13.5 M7.5 13.7 H13.5" stroke="#dcdcd6" stroke-width="0.6"/><rect x="2.3" y="0.4" width="4.4" height="9.4" rx="2.2" stroke="#8e8e8e" stroke-width="0.9" fill="#f2f2f2"/><path d="M4.5 2.5 V7.5" stroke="#bbb" stroke-width="0.8"/><g transform="translate(3.5,15.3)"><path d="M2.50 0.00 L3.70 0.00 M1.77 1.77 L2.62 2.62 M0.00 2.50 L0.00 3.70 M-1.77 1.77 L-2.62 2.62 M-2.50 0.00 L-3.70 0.00 M-1.77 -1.77 L-2.62 -2.62 M-0.00 -2.50 L-0.00 -3.70 M1.77 -1.77 L2.62 -2.62" stroke="#3d4478" stroke-width="1.2"/><circle r="2.2" fill="#fafafa" stroke="#3d4478" stroke-width="1.2"/></g></svg>
<div class="a" style="left:338.5px;top:625px;font-size:11.65px;color:#555;">Wiedervorlage</div>
<div class="a" style="left:706.8px;top:626px;font-size:11.3px;color:#555;">21.01.2022 14:26</div>
<div class="a" style="left:802.7px;top:625px;font-size:11.75px;color:#555;">Robert Leitner</div>
<!--/TABLE-->

<!-- scrollbar -->
<div class="a" style="left:1887px;top:276px;width:11px;height:769px;background:#efefef"></div>
<svg style="left:1890px;top:280px" width="8" height="8" viewBox="0 0 8 8"><path d="M1 6.5 L5 2.5 L9 6.5" stroke="#555" stroke-width="1.8" fill="none"/></svg>
<!-- dropzone window -->
<div class="a" style="left:1600px;top:312px;width:310px;height:247px;background:#f0f0f0;border:1px solid #8a8a8a;box-shadow:0 0 10px rgba(0,0,0,.22)"></div>
<div class="a" style="left:1601px;top:313px;width:297px;height:30px;background:#fff"></div>
<div class="a" style="left:1609px;top:319px;width:16px;height:16px;border:1px solid #f0b060;background:#fff"></div>
<svg style="left:1610px;top:322px" width="14" height="8" viewBox="0 0 14 8"><path d="M0.5 6.5 L2 3 L3 6 L5 3 L4.5 6 L7 2 M7 1.5 H13" stroke="#111" stroke-width="1.3" fill="none"/></svg>
<div class="a" style="left:1630.5px;top:321.6px;font-size:11.35px;color:#9a9a9a">DMS4SAP DropZone</div>
<div class="a" style="left:1789px;top:327px;width:10px;height:1px;background:#777"></div>
<div class="a" style="left:1834px;top:322px;width:10px;height:10px;border:1px solid #777"></div>
<svg style="left:1880px;top:322px" width="11" height="11" viewBox="0 0 11 11"><path d="M0.5 0.5 L10.5 10.5 M10.5 0.5 L0.5 10.5" stroke="#777" stroke-width="1"/></svg>
<div class="a" style="left:1616.4px;top:352.1px;font-size:15px;font-weight:bold;color:#000">Kundenauftrag</div>
<div class="a" style="left:1613px;top:372px;width:283px;height:151px;background:#fff;border:1px solid #7d7d82"></div>
<div class="a" style="left:1713px;top:374px;width:1px;height:24px;background:#e5e5e5"></div>
<div class="a" style="left:1876px;top:374px;width:1px;height:24px;background:#e5e5e5"></div>
<div class="dz" style="left:1621px;top:380.4px;font-size:10.55px">Verschlagwortung</div>
<div class="dz" style="left:1720px;top:380.4px;font-size:10.55px">Wert</div>
<div class="a" style="left:1619px;top:398px;width:95px;height:119px;background:#bfcddb"></div>
<div class="dz" style="left:1621px;top:401.5px">Vertriebs-MA</div>
<div class="dz" style="left:1621px;top:418.5px">GP-Nummer</div>
<div class="dz" style="left:1621px;top:435.5px">GP-Name</div>
<div class="dz" style="left:1621px;top:452.5px">Ort</div>
<div class="dz" style="left:1621px;top:469.5px">Projekt</div>
<div class="dz" style="left:1621px;top:486.5px">Vorgangsnummer</div>
<div class="dz" style="left:1621px;top:503.5px">Eigentümer</div>
<div class="a" style="left:1613px;top:530px;width:13px;height:13px;border:1px solid #333;background:#fff"></div>
<svg style="left:1615px;top:532px" width="9" height="9" viewBox="0 0 9 9"><path d="M0.8 4.5 L3.3 7.2 L8.3 1.2" stroke="#333" stroke-width="1.1" fill="none"/></svg>
<div class="dz" style="left:1632.2px;top:531.6px">Im Vordergrund bleiben</div>

<!-- app header -->

<!-- logo -->
<svg style="left:52px;top:91px" width="45" height="22" viewBox="0 0 45 22">
<text x="0.5" y="21" font-family="Liberation Sans" font-size="12.4" fill="#1c1c3c" textLength="15.6" lengthAdjust="spacingAndGlyphs">Be</text>
<path d="M15.6 8.2 L18.2 6.3 V21" stroke="#f5a500" stroke-width="1.7" fill="none"/>
<text x="20.2" y="14.9" font-family="Liberation Sans" font-size="16.5" fill="#1c1c3c" textLength="23" lengthAdjust="spacingAndGlyphs">eye</text>
<path d="M20.6 16.8 H43" stroke="#9c9c9c" stroke-width="1.2" stroke-dasharray="1.1 0.35"/><path d="M20.6 19.6 H43" stroke="#9c9c9c" stroke-width="1.4" stroke-dasharray="1.3 0.4"/>
<circle cx="4.2" cy="2.3" r="1.5" fill="#111"/>
<path d="M5.5 2.8 L22.5 2.2" stroke="#111" stroke-width="1.3"/>
<path d="M1.4 7 L1.8 12" stroke="#111" stroke-width="1.8"/>
<path d="M6.5 10.5 L7.2 7.2 Q8.5 5.5 10 6.2 L9 9 L8 12" stroke="#1c1c50" stroke-width="1.6" fill="none"/>
<path d="M4.5 7 L5.3 11.5" stroke="#f5a500" stroke-width="1.1"/>
</svg>
<!-- header right -->
<svg style="left:1626px;top:93px" width="20" height="20" viewBox="0 0 20 20"><circle cx="10" cy="10" r="8.7" stroke="#8a8a8a" stroke-width="2.5" fill="none"/><path d="M10 4.8 V15.2 M4.8 10 H15.2" stroke="#777" stroke-width="2"/></svg>
<div class="a" style="left:1648.5px;top:95.5px;font-size:11.9px;color:#f5a500">Merkliste</div>
<div class="a" style="left:1702px;top:94px;font-size:16px;font-weight:bold;color:#f5a500">*</div>
<svg style="left:1715px;top:95px" width="13" height="15" viewBox="0 0 13 15"><path d="M0.5 2.5 H12.5 M4.5 2.5 V0.8 H8.5 V2.5" stroke="#f5a500" stroke-width="1.3" fill="none"/><path d="M1.8 4 H11.2 L10.5 14.3 H2.5 Z" stroke="#f5a500" stroke-width="1.3" fill="none"/><path d="M4.8 5.5 V12.5 M6.5 5.5 V12.5 M8.2 5.5 V12.5" stroke="#f5a500" stroke-width="1"/></svg>
<svg style="left:1734px;top:100px" width="11" height="8" viewBox="0 0 11 8"><path d="M1 1.5 L5.5 6 L10 1.5" stroke="#f5a500" stroke-width="2.8" fill="none"/></svg>
<svg style="left:1772px;top:92px" width="21" height="22" viewBox="0 0 21 22"><ellipse cx="10.5" cy="6.5" rx="5.4" ry="6.1" fill="#f5a500"/><path d="M4.6 12.3 Q10.5 16 16.4 12.3 L20.4 19.5 Q20.6 21.2 19 21.2 H2 Q0.4 21.2 0.6 19.5 Z" fill="#f5a500"/></svg>
<div class="a" style="left:1800.5px;top:95.5px;font-size:11.75px;color:#f5a500">Robert Leitner</div>
<svg style="left:1881px;top:100px" width="12" height="9" viewBox="0 0 12 9"><path d="M1 1.2 L6 6.5 L11 1.2" stroke="#f5a500" stroke-width="2.4" fill="none"/></svg>

<svg style="left:3px;top:99px" width="20" height="15" viewBox="0 0 20 15"><path d="M0 1.6 H19.5 M0 7.2 H19.5 M0 12.8 H19.5" stroke="#000" stroke-width="2.6"/></svg>

</body></html>
